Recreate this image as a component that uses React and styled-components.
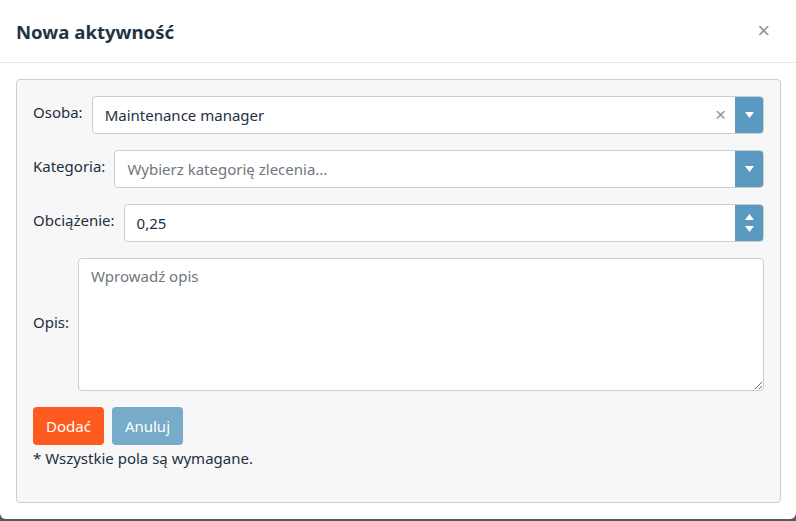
import React from 'react';
import styled, { createGlobalStyle } from 'styled-components';

const GlobalStyle = createGlobalStyle`
  html, body {
    margin: 0;
    padding: 0;
    background: #5a5a5a;
    overflow: hidden;
  }
  body {
    font-family: "Noto Sans", "Open Sans", sans-serif;
    color: #1d2f3f;
  }
`;

const Modal = styled.div`
  width: 796px;
  height: 519px;
  background: #fff;
  border-radius: 0 0 6px 6px;
  box-sizing: border-box;
  display: flex;
  flex-direction: column;
`;

const Header = styled.div`
  height: 63px;
  box-sizing: border-box;
  display: flex;
  align-items: center;
  justify-content: space-between;
  padding: 0 16px;
  border-bottom: 1px solid #e5e5e5;
`;

const Title = styled.h4`
  margin: 0;
  font-size: 18.6px;
  font-weight: 700;
  color: #1e3445;
  padding-top: 1px;
`;

const Close = styled.button`
  border: none;
  background: none;
  font-size: 22px;
  color: #8a969f;
  padding: 0 10px 0 0;
  line-height: 1;
  cursor: pointer;
  font-family: "Liberation Sans", sans-serif;
`;

const Body = styled.div`
  padding: 16px 15px 16px 16px;
`;

const Panel = styled.div`
  background: #f7f7f7;
  border: 1px solid #cfcfcf;
  border-radius: 4px;
  padding: 16px 16px 34px 16px;
  display: flex;
  flex-direction: column;
  gap: 16px;
`;

const Row = styled.div`
  display: flex;
  align-items: center;
  gap: 9px;
`;

const Label = styled.label`
  font-size: 15px;
  color: #1d2f3f;
  white-space: nowrap;
  margin-top: -6px;
`;

const Field = styled.div`
  flex: 1;
  height: 38px;
  box-sizing: border-box;
  display: flex;
  align-items: stretch;
  background: #fff;
  border: 1px solid #cdcdcd;
  border-radius: 4px;
  overflow: hidden;
`;

const Value = styled.div`
  flex: 1;
  display: flex;
  align-items: center;
  padding-left: 12px;
  font-size: 15px;
  color: ${p => (p.$placeholder ? '#6f7780' : '#1d2f3f')};
`;

const Clear = styled.span`
  display: flex;
  align-items: center;
  padding: 0 9px;
  color: #8c959c;
  font-size: 19px;
  font-family: "Liberation Sans", sans-serif;
`;

const Addon = styled.div`
  width: 28px;
  background: #5a9ac2;
  display: flex;
  flex-direction: column;
  align-items: center;
  justify-content: center;
  gap: 6px;
`;

const TextArea = styled.textarea`
  flex: 1;
  height: 133px;
  box-sizing: border-box;
  border: 1px solid #cdcdcd;
  border-radius: 4px;
  background: #fff;
  padding: 7px 12px;
  font-family: inherit;
  font-size: 15px;
  color: #1d2f3f;
  resize: vertical;
  outline: none;
  &::placeholder {
    color: #6f7780;
  }
`;

const Buttons = styled.div`
  display: flex;
  gap: 8px;
`;

const Button = styled.button`
  height: 38px;
  padding: 0 13px;
  border: none;
  border-radius: 4px;
  background: ${p => p.$bg};
  color: #fff;
  font-family: inherit;
  font-size: 15px;
  cursor: pointer;
`;

const Note = styled.div`
  font-size: 15px;
  margin-top: -13px;
  color: #1d2f3f;
`;

const Tri = ({ up }) => (
  <svg width="9" height="6" viewBox="0 0 9 6">
    <path d={up ? 'M0 6 L4.5 0 L9 6 Z' : 'M0 0 L9 0 L4.5 6 Z'} fill="#fff" />
  </svg>
);

export default function App() {
  return (
    <>
      <GlobalStyle />
      <Modal>
        <Header>
          <Title>Nowa aktywność</Title>
          <Close>×</Close>
        </Header>
        <Body>
          <Panel>
            <Row>
              <Label>Osoba:</Label>
              <Field>
                <Value>Maintenance manager</Value>
                <Clear>×</Clear>
                <Addon><Tri /></Addon>
              </Field>
            </Row>
            <Row>
              <Label>Kategoria:</Label>
              <Field>
                <Value $placeholder>Wybierz kategorię zlecenia...</Value>
                <Addon><Tri /></Addon>
              </Field>
            </Row>
            <Row>
              <Label>Obciążenie:</Label>
              <Field>
                <Value>0,25</Value>
                <Addon><Tri up /><Tri /></Addon>
              </Field>
            </Row>
            <Row>
              <Label>Opis:</Label>
              <TextArea placeholder="Wprowadź opis" />
            </Row>
            <Buttons>
              <Button $bg="#ff5a1f">Dodać</Button>
              <Button $bg="#76abc9">Anuluj</Button>
            </Buttons>
            <Note>* Wszystkie pola są wymagane.</Note>
          </Panel>
        </Body>
      </Modal>
    </>
  );
}
